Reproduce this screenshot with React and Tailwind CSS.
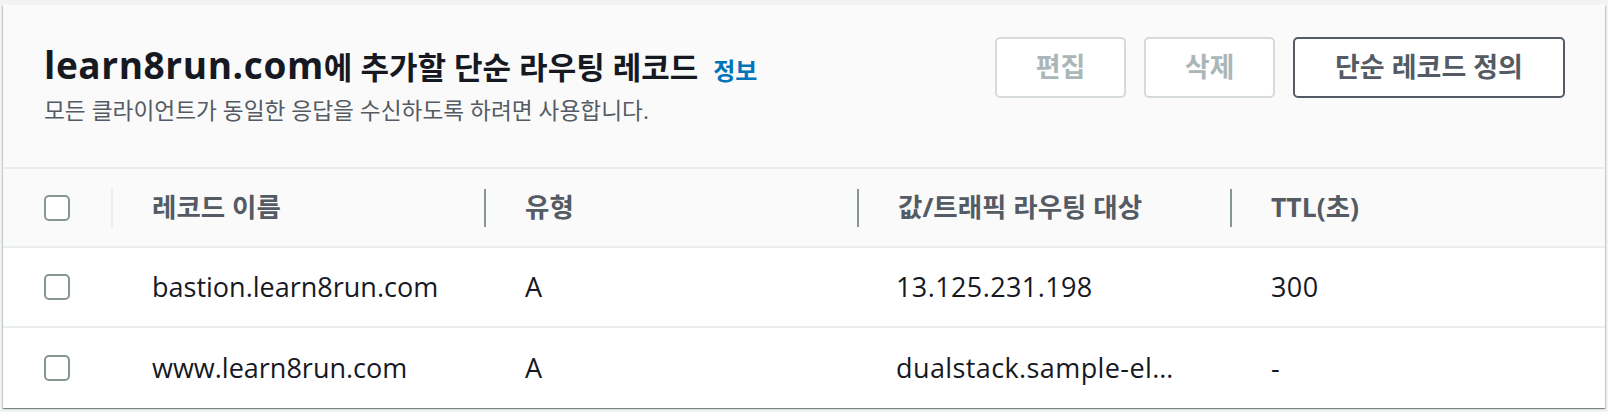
import React from 'react'

const FONT = { fontFamily: "'Open Sans', 'Noto Sans CJK KR', sans-serif" }

const rows = [
  { name: 'bastion.learn8run.com', type: 'A', value: '13.125.231.198', ttl: '300' },
  { name: 'www.learn8run.com', type: 'A', value: 'dualstack.sample-el…', ttl: '-' },
]

function Checkbox() {
  return <div className="w-[26px] h-[26px] rounded-[5px] border-2 border-[#879596] bg-white" />
}

function HeadCell({ children, light }) {
  return (
    <div className="flex items-center">
      <div className={`w-[2px] h-[38px] ${light ? 'bg-[#eaeded]' : 'bg-[#879596]'}`} />
      <span className="ml-[39px] text-[26.5px] font-bold text-[#545b64]">{children}</span>
    </div>
  )
}

export default function App() {
  return (
    <div className="min-h-screen bg-[#f2f3f3] pt-[5px] px-[3px]" style={FONT}>
      <div className="bg-white shadow-[0_1px_1px_0_rgba(0,28,36,0.3),1px_1px_1px_0_rgba(0,28,36,0.15),-1px_1px_1px_0_rgba(0,28,36,0.15)]">
        {/* header */}
        <div className="h-[164px] bg-[#fafafa] border-b-2 border-[#eaeded] flex justify-between pl-[41px] pr-[40px] pt-[32px]">
          <div className="mt-[12px]">
            <div className="flex items-center h-[40px]">
              <h2 className="font-bold text-[#16191f] leading-[40px] whitespace-nowrap">
                <span className="text-[37px] tracking-[0.6px]">learn8run.com</span>
                <span className="text-[31px]">에 추가할 단순 라우팅 레코드</span>
              </h2>
              <a className="ml-[15px] text-[24px] font-bold text-[#0073bb] mt-[3px]">정보</a>
            </div>
            <p className="mt-[7px] text-[22.7px] leading-[30px] text-[#545b64]">
              모든 클라이언트가 동일한 응답을 수신하도록 하려면 사용합니다.
            </p>
          </div>
          <div className="flex gap-[18px]">
            <button className="w-[131px] h-[61px] rounded-[5px] border-2 border-[#d5dbdb] bg-white text-[27px] font-bold text-[#aab7b8]">편집</button>
            <button className="w-[131px] h-[61px] rounded-[5px] border-2 border-[#d5dbdb] bg-white text-[27px] font-bold text-[#aab7b8]">삭제</button>
            <button className="w-[272px] h-[61px] rounded-[5px] border-2 border-[#545b64] bg-white text-[27px] font-bold text-[#545b64]">단순 레코드 정의</button>
          </div>
        </div>

        {/* column headers */}
        <div className="grid grid-cols-[108px_373px_373px_373px_1fr] h-[79px] bg-[#fafafa] border-b-2 border-[#eaeded]">
          <div className="flex items-center pl-[41px]"><Checkbox /></div>
          <HeadCell light>레코드 이름</HeadCell>
          <HeadCell>유형</HeadCell>
          <HeadCell>값/트래픽 라우팅 대상</HeadCell>
          <HeadCell>TTL(초)</HeadCell>
        </div>

        {/* rows */}
        {rows.map((r, i) => (
          <div
            key={r.name}
            className={`grid grid-cols-[108px_373px_373px_373px_1fr] items-center text-[27px] text-[#16191f] ${i === 0 ? 'h-[80px] border-b-2 border-[#eaeded]' : 'h-[80px]'}`}
          >
            <div className="pl-[41px]"><Checkbox /></div>
            <div className="pl-[41px] whitespace-nowrap">{r.name}</div>
            <div className="pl-[41px]">{r.type}</div>
            <div className="pl-[39px] whitespace-nowrap tracking-[0.4px]">{r.value}</div>
            <div className="pl-[41px] tracking-[0.4px]">{r.ttl}</div>
          </div>
        ))}
      </div>
    </div>
  )
}
